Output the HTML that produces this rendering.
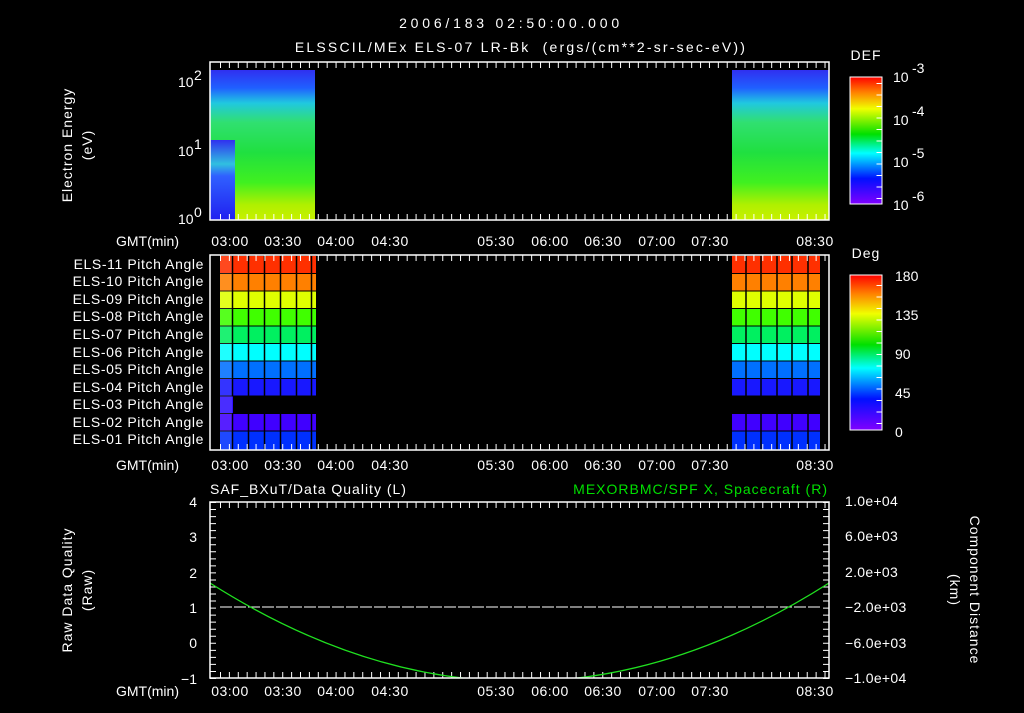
<!DOCTYPE html>
<html><head><meta charset="utf-8"><style>
body{margin:0;background:#000;width:1024px;height:708px;overflow:hidden}
svg text{font-family:"Liberation Sans",sans-serif;fill:#fff;font-size:14px}
</style></head><body>
<svg width="1024" height="708" viewBox="0 0 1024 708">
<defs>
<linearGradient id="spec" x1="0" y1="0" x2="0" y2="1">
<stop offset="0" stop-color="#3030f0"/><stop offset="0.12" stop-color="#2060ff"/><stop offset="0.22" stop-color="#20c8e0"/>
<stop offset="0.35" stop-color="#30e070"/><stop offset="0.55" stop-color="#20e040"/><stop offset="0.75" stop-color="#40f020"/>
<stop offset="0.9" stop-color="#b0f000"/><stop offset="1" stop-color="#c8f000"/></linearGradient>
<linearGradient id="specL" x1="0" y1="0" x2="0" y2="1">
<stop offset="0" stop-color="#3030f0"/><stop offset="0.3" stop-color="#30c0e0"/><stop offset="0.45" stop-color="#3060ff"/><stop offset="1" stop-color="#2020f0"/></linearGradient>
<linearGradient id="rb" x1="0" y1="1" x2="0" y2="0">
<stop offset="0" stop-color="#8000ff"/><stop offset="0.2" stop-color="#0010ff"/><stop offset="0.4" stop-color="#00ffff"/>
<stop offset="0.55" stop-color="#00e000"/><stop offset="0.75" stop-color="#f0ff00"/><stop offset="0.88" stop-color="#ff8000"/><stop offset="1" stop-color="#ff0000"/></linearGradient>
<clipPath id="c3"><rect x="210" y="502" width="619" height="176"/></clipPath>
</defs>
<text x="511" y="28" text-anchor="middle" font-size="16" letter-spacing="3.8">2006/183 02:50:00.000</text>
<text x="521" y="52" text-anchor="middle" font-size="16" letter-spacing="2.2" xml:space="preserve">ELSSCIL/MEx ELS-07 LR-Bk  (ergs/(cm**2-sr-sec-eV))</text>
<!-- panel 1 -->
<rect x="210" y="70" width="105" height="150" fill="url(#spec)"/>
<rect x="210" y="140" width="25" height="80" fill="url(#specL)"/>
<rect x="732" y="70" width="97" height="150" fill="url(#spec)"/>
<rect x="210" y="62" width="619" height="158" fill="none" stroke="#fff" stroke-width="1.5"/>
<g fill="#fff" font-size="14">
<text x="178" y="87">10</text><text x="194" y="80" font-size="10">2</text>
<text x="178" y="156">10</text><text x="194" y="149" font-size="10">1</text>
<text x="178" y="224">10</text><text x="194" y="217" font-size="10">0</text>
</g>
<text transform="translate(72,145) rotate(-90)" text-anchor="middle" font-size="15" letter-spacing="1">Electron Energy</text>
<text transform="translate(92,145) rotate(-90)" text-anchor="middle" font-size="15" letter-spacing="1">(eV)</text>
<text x="866" y="60" text-anchor="middle" font-size="16" letter-spacing="1">DEF</text>
<rect x="850" y="77" width="32" height="127" fill="url(#rb)" stroke="#fff"/>
<g font-size="16"><text x="893" y="82">10</text><text x="893" y="125">10</text><text x="893" y="167">10</text><text x="893" y="210">10</text></g>
<g font-size="11"><text x="912" y="73">-3</text><text x="912" y="116">-4</text><text x="912" y="158">-5</text><text x="912" y="201">-6</text></g>
<!-- axis labels -->
<g font-size="13.5">
<text x="116" y="246">GMT(min)</text><text x="116" y="470">GMT(min)</text><text x="116" y="696">GMT(min)</text>
</g>
<g font-size="14" text-anchor="middle" letter-spacing="0.5">
<text x="230" y="246">03:00</text><text x="283" y="246">03:30</text><text x="336" y="246">04:00</text><text x="390" y="246">04:30</text><text x="496" y="246">05:30</text><text x="550" y="246">06:00</text><text x="603" y="246">06:30</text><text x="657" y="246">07:00</text><text x="710" y="246">07:30</text><text x="815" y="246">08:30</text>
<text x="230" y="470">03:00</text><text x="283" y="470">03:30</text><text x="336" y="470">04:00</text><text x="390" y="470">04:30</text><text x="496" y="470">05:30</text><text x="550" y="470">06:00</text><text x="603" y="470">06:30</text><text x="657" y="470">07:00</text><text x="710" y="470">07:30</text><text x="815" y="470">08:30</text>
<text x="230" y="696">03:00</text><text x="283" y="696">03:30</text><text x="336" y="696">04:00</text><text x="390" y="696">04:30</text><text x="496" y="696">05:30</text><text x="550" y="696">06:00</text><text x="603" y="696">06:30</text><text x="657" y="696">07:00</text><text x="710" y="696">07:30</text><text x="815" y="696">08:30</text>
</g>
<!-- panel 2 -->
<g>
<rect x="220" y="256" width="96" height="17" fill="#ff3000"/><rect x="732" y="256" width="88" height="17" fill="#ff3000"/>
<rect x="220" y="274" width="96" height="16.5" fill="#ff8000"/><rect x="732" y="274" width="88" height="16.5" fill="#ff8000"/>
<rect x="220" y="291.5" width="96" height="16.5" fill="#e0ff00"/><rect x="732" y="291.5" width="88" height="16.5" fill="#e0ff00"/>
<rect x="220" y="309" width="96" height="16.5" fill="#40ff00"/><rect x="732" y="309" width="88" height="16.5" fill="#40ff00"/>
<rect x="220" y="326.5" width="96" height="16.5" fill="#00f060"/><rect x="732" y="326.5" width="88" height="16.5" fill="#00f060"/>
<rect x="220" y="344" width="96" height="16.5" fill="#00ffff"/><rect x="732" y="344" width="88" height="16.5" fill="#00ffff"/>
<rect x="220" y="361.5" width="96" height="16.5" fill="#0070ff"/><rect x="732" y="361.5" width="88" height="16.5" fill="#0070ff"/>
<rect x="220" y="379" width="96" height="16.5" fill="#1818ff"/><rect x="732" y="379" width="88" height="16.5" fill="#1818ff"/>
<rect x="220" y="396.5" width="13" height="16.5" fill="#3010ff"/>
<rect x="220" y="414" width="96" height="16.5" fill="#4000ff"/><rect x="732" y="414" width="88" height="16.5" fill="#4000ff"/>
<rect x="220" y="431.5" width="96" height="18" fill="#0030ff"/><rect x="732" y="431.5" width="88" height="18" fill="#0030ff"/>
<rect x="220" y="256" width="12" height="193" fill="#fff" opacity="0.12"/>
<g stroke="#000" stroke-width="1.5">
<line x1="232.5" y1="256" x2="232.5" y2="396"/><line x1="232.5" y1="414" x2="232.5" y2="450"/>
<line x1="248.5" y1="256" x2="248.5" y2="396"/><line x1="264.5" y1="256" x2="264.5" y2="396"/><line x1="280.5" y1="256" x2="280.5" y2="396"/><line x1="296.5" y1="256" x2="296.5" y2="396"/><line x1="311.5" y1="256" x2="311.5" y2="396"/>
<line x1="248.5" y1="414" x2="248.5" y2="450"/><line x1="264.5" y1="414" x2="264.5" y2="450"/><line x1="280.5" y1="414" x2="280.5" y2="450"/><line x1="296.5" y1="414" x2="296.5" y2="450"/><line x1="311.5" y1="414" x2="311.5" y2="450"/>
<line x1="746" y1="256" x2="746" y2="450"/><line x1="761" y1="256" x2="761" y2="450"/><line x1="777" y1="256" x2="777" y2="450"/><line x1="792" y1="256" x2="792" y2="450"/><line x1="808" y1="256" x2="808" y2="450"/>
</g>
</g>
<rect x="210" y="255" width="619" height="195" fill="none" stroke="#fff" stroke-width="1.5"/>
<g font-size="13" text-anchor="end" letter-spacing="0.6">
<text x="204" y="269">ELS-11 Pitch Angle</text><text x="204" y="286">ELS-10 Pitch Angle</text><text x="204" y="304">ELS-09 Pitch Angle</text><text x="204" y="321">ELS-08 Pitch Angle</text><text x="204" y="339">ELS-07 Pitch Angle</text><text x="204" y="357">ELS-06 Pitch Angle</text><text x="204" y="374">ELS-05 Pitch Angle</text><text x="204" y="392">ELS-04 Pitch Angle</text><text x="204" y="409">ELS-03 Pitch Angle</text><text x="204" y="427">ELS-02 Pitch Angle</text><text x="204" y="444">ELS-01 Pitch Angle</text>
</g>
<text x="866" y="258" text-anchor="middle" font-size="16" letter-spacing="1">Deg</text>
<rect x="850" y="275" width="32" height="155" fill="url(#rb)" stroke="#fff"/>
<g font-size="16"><text x="895" y="281">180</text><text x="895" y="320">135</text><text x="895" y="359">90</text><text x="895" y="398">45</text><text x="895" y="437">0</text></g>
<!-- ticks -->
<g stroke="#fff" fill="none">
<g stroke-width="6" stroke-dasharray="1 7.89" stroke-dashoffset="-7">
<line x1="213" y1="65" x2="829" y2="65"/><line x1="213" y1="217" x2="829" y2="217"/>
<line x1="213" y1="258" x2="829" y2="258"/><line x1="213" y1="447" x2="829" y2="447"/>
<line x1="213" y1="505" x2="829" y2="505"/><line x1="213" y1="675" x2="829" y2="675"/>
</g>
<g stroke-width="6" stroke-dasharray="1 6.04">
<line x1="213" y1="502" x2="213" y2="679"/><line x1="826" y1="502" x2="826" y2="679"/>
</g>
<g stroke-width="5" stroke-dasharray="1 10.5">
<line x1="879" y1="83" x2="879" y2="204"/><line x1="879" y1="285" x2="879" y2="430"/>
</g>
</g>
<!-- panel 3 -->
<text x="210" y="494" font-size="16" letter-spacing="1">SAF_BXuT/Data Quality (L)</text>
<text x="828" y="494" font-size="16" letter-spacing="1" text-anchor="end" style="fill:#00e000">MEXORBMC/SPF X, Spacecraft (R)</text>
<line x1="220" y1="607" x2="820" y2="607" stroke="#fff" stroke-dasharray="12,2"/>
<path d="M210,583 Q520,780 829,583" fill="none" stroke="#20e020" stroke-width="1.3" clip-path="url(#c3)"/>
<rect x="210" y="502" width="619" height="176" fill="none" stroke="#fff" stroke-width="1.5"/>
<g font-size="15" text-anchor="end"><text x="197" y="507">4</text><text x="197" y="542">3</text><text x="197" y="578">2</text><text x="197" y="613">1</text><text x="197" y="648">0</text><text x="197" y="684">−1</text></g>
<text transform="translate(72,590) rotate(-90)" text-anchor="middle" font-size="15" letter-spacing="1">Raw Data Quality</text>
<text transform="translate(92,590) rotate(-90)" text-anchor="middle" font-size="15" letter-spacing="1">(Raw)</text>
<g font-size="14" letter-spacing="0.3"><text x="845" y="506">1.0e+04</text><text x="845" y="541">6.0e+03</text><text x="845" y="577">2.0e+03</text><text x="845" y="612">−2.0e+03</text><text x="845" y="648">−6.0e+03</text><text x="845" y="683">−1.0e+04</text></g>
<text transform="translate(970,590) rotate(90)" text-anchor="middle" font-size="15" letter-spacing="1">Component Distance</text>
<text transform="translate(950,590) rotate(90)" text-anchor="middle" font-size="15" letter-spacing="1">(km)</text>
</svg>
</body></html>
